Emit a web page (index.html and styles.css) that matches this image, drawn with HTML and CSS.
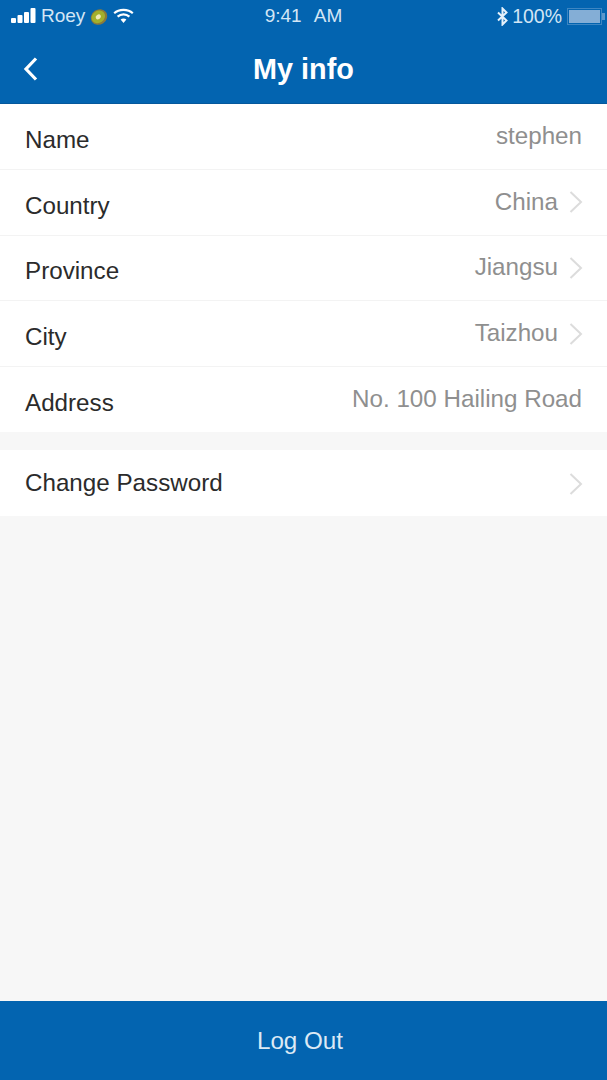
FILE: index.html
```html
<!DOCTYPE html>
<html lang="en">

<head>
    <meta charset="UTF-8">
    <meta name="viewport" content="width=device-width, initial-scale=1.0">
    <title>My info</title>
    <link rel="stylesheet" href="styles.css">
</head>

<body>
    <div class="screen">
        <div class="topBar">
            <div class="statusBar">
                <div class="statusLeft">
                    <svg class="signal" width="25" height="16" viewBox="0 0 25 16">
                        <rect x="0" y="10" width="5" height="5" rx="1" />
                        <rect x="6.5" y="7" width="5" height="8" rx="1" />
                        <rect x="13" y="4" width="5" height="11" rx="1" />
                        <rect x="19.5" y="0" width="5" height="15" rx="1" />
                    </svg>
                    <span class="carrier">Roey</span>
                    <svg class="kiwi" width="18" height="18" viewBox="0 0 18 18">
                        <ellipse cx="9" cy="9" rx="8.5" ry="7.5" transform="rotate(-35 9 9)" fill="#8a7a3c" />
                        <ellipse cx="8.5" cy="8.5" rx="7" ry="6" transform="rotate(-35 9 9)" fill="#a3b02c" />
                        <ellipse cx="8.5" cy="8.5" rx="2.8" ry="2.2" transform="rotate(-35 9 9)" fill="#efeab8" />
                    </svg>
                    <svg class="wifi" width="21" height="16" viewBox="0 0 21 16" fill="none">
                        <path d="M1.2 5.2C6 .8 15 .8 19.8 5.2" />
                        <path d="M4.6 8.6C8 5.6 13 5.6 16.4 8.6" />
                        <path class="wifiDot" d="M7.6 11.6C9.2 10.2 11.8 10.2 13.4 11.6L10.5 15Z" />
                    </svg>
                </div>
                <div class="statusTime">9:41 AM</div>
                <div class="statusRight">
                    <svg class="bluetooth" width="11" height="19" viewBox="0 0 11 19" fill="none">
                        <path d="M1 5.5L9.5 13.5L5.5 17.5V1.5L9.5 5.5L1 13.5" />
                    </svg>
                    <span class="battPercent">100%</span>
                    <div class="battery">
                        <div class="batteryFill"></div>
                    </div>
                    <div class="batteryTip"></div>
                </div>
            </div>
            <div class="navBar">
                <svg class="backIcon" width="16" height="26" viewBox="0 0 16 26" fill="none">
                    <path d="M13 2.5L3 13L13 23.5" />
                </svg>
                <h1 class="navTitle">My info</h1>
            </div>
        </div>

        <div class="infoGroup">
            <div class="infoRow">
                <span class="rowLabel">Name</span>
                <span class="rowValue">stephen</span>
            </div>
            <div class="infoRow">
                <span class="rowLabel">Country</span>
                <span class="rowValue">China</span>
                <svg class="chevron" width="14" height="22" viewBox="0 0 14 22" fill="none"><path d="M1.5 1L12 11L1.5 21" /></svg>
            </div>
            <div class="infoRow">
                <span class="rowLabel">Province</span>
                <span class="rowValue">Jiangsu</span>
                <svg class="chevron" width="14" height="22" viewBox="0 0 14 22" fill="none"><path d="M1.5 1L12 11L1.5 21" /></svg>
            </div>
            <div class="infoRow">
                <span class="rowLabel">City</span>
                <span class="rowValue">Taizhou</span>
                <svg class="chevron" width="14" height="22" viewBox="0 0 14 22" fill="none"><path d="M1.5 1L12 11L1.5 21" /></svg>
            </div>
            <div class="infoRow">
                <span class="rowLabel">Address</span>
                <span class="rowValue">No. 100 Hailing Road</span>
            </div>
        </div>

        <div class="infoGroup">
            <div class="infoRow passwordRow">
                <span class="rowLabel">Change Password</span>
                <svg class="chevron" width="14" height="22" viewBox="0 0 14 22" fill="none"><path d="M1.5 1L12 11L1.5 21" /></svg>
            </div>
        </div>

        <button type="button" class="logOut">Log Out</button>
    </div>
</body>

</html>
```
FILE: styles.css
```css
* {
    box-sizing: border-box;
}

body {
    margin: 0;
    background-color: #f7f7f7;
    font-family: "Liberation Sans", Arial, sans-serif;
}

.screen {
    display: flex;
    flex-direction: column;
    height: 1080px;
    overflow: hidden;
}

.topBar {
    height: 104px;
    background-color: #0364b0;
    border-bottom: 1px solid #05589c;
    color: #fff;
}

.statusBar {
    display: grid;
    grid-template-columns: 1fr auto 1fr;
    align-items: center;
    height: 32px;
    padding: 0 2px 0 11px;
    font-size: 19px;
    color: #d3e6f5;
}

.statusLeft {
    display: flex;
    align-items: center;
}

.signal {
    fill: #fff;
    margin-right: 5px;
}

.carrier {
    margin-right: 5px;
}

.kiwi {
    margin-top: 2px;
}

.wifi {
    margin-left: 5px;
    margin-top: -1px;
    stroke: #fff;
    stroke-width: 2.2;
}

.wifiDot {
    fill: #fff;
    stroke: none;
}

.statusTime {
    font-size: 19px;
    word-spacing: 8px;
    margin-right: 9px;
}

.statusRight {
    display: flex;
    align-items: center;
    justify-content: flex-end;
}

.bluetooth {
    stroke: #e6f1fa;
    stroke-width: 2;
    margin-right: 4px;
}

.battPercent {
    font-size: 19.5px;
    margin-right: 5px;
}

.battery {
    width: 35px;
    height: 17px;
    border: 1px solid #3d86c2;
    padding: 1px;
}

.batteryFill {
    height: 100%;
    background-color: #84aed6;
}

.batteryTip {
    width: 3px;
    height: 7px;
    background-color: #5b97cb;
}

.navBar {
    position: relative;
    display: flex;
    align-items: center;
    justify-content: center;
    height: 71px;
    padding-top: 4px;
}

.backIcon {
    position: absolute;
    left: 23px;
    top: 24px;
    stroke: #fff;
    stroke-width: 3.2;
}

.navTitle {
    margin: 0;
    font-size: 28.8px;
    font-weight: bold;
}

.infoGroup {
    background-color: #fff;
    margin-bottom: 18px;
}

.infoRow {
    display: flex;
    align-items: center;
    height: 65.8px;
    padding: 0 25px;
    border-bottom: 1px solid #f3f3f3;
}

.infoRow:last-child {
    height: 65px;
    border-bottom: none;
}

.rowLabel {
    flex: 1;
    font-size: 24.2px;
    color: #2b2b2b;
    padding-top: 7px;
}

.rowValue {
    font-size: 24.2px;
    color: #8f8f8f;
    padding-bottom: 1px;
}

.chevron {
    stroke: #dcdcdc;
    stroke-width: 2;
    margin-left: 11px;
    margin-right: -1px;
}

.infoRow.passwordRow {
    height: 66px;
}

.passwordRow .rowLabel {
    padding-top: 0;
}

.passwordRow .chevron {
    margin-top: 2px;
}

.logOut {
    margin-top: auto;
    height: 79px;
    width: 100%;
    border: none;
    padding: 0 7px 0 0;
    background-color: #0364b0;
    color: #dce9f5;
    font-family: inherit;
    font-size: 24.2px;
    cursor: pointer;
}
```
